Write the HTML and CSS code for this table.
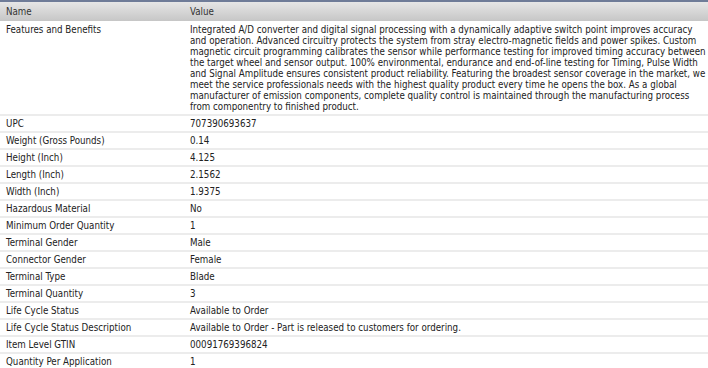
FILE: index.html
```html
<!DOCTYPE html>
<html>
<head>
<meta charset="utf-8">
<link rel="stylesheet" href="styles.css">
</head>
<body>
<div class="grid">
  <div class="hd">Name</div><div class="hd">Value</div>
  <div class="c big">Features and Benefits</div>
  <div class="c big"><span class="ln">Integrated A/D converter and digital signal processing with a dynamically adaptive switch point improves accuracy</span><span class="ln">and operation. Advanced circuitry protects the system from stray electro-magnetic fields and power spikes. Custom</span><span class="ln">magnetic circuit programming calibrates the sensor while performance testing for improved timing accuracy between</span><span class="ln">the target wheel and sensor output. 100% environmental, endurance and end-of-line testing for Timing, Pulse Width</span><span class="ln">and Signal Amplitude ensures consistent product reliability. Featuring the broadest sensor coverage in the market, we</span><span class="ln">meet the service professionals needs with the highest quality product every time he opens the box. As a global</span><span class="ln">manufacturer of emission components, complete quality control is maintained through the manufacturing process</span><span class="ln">from componentry to finished product.</span></div>
  <div class="c">UPC</div><div class="c">707390693637</div>
  <div class="c">Weight (Gross Pounds)</div><div class="c">0.14</div>
  <div class="c">Height (Inch)</div><div class="c">4.125</div>
  <div class="c">Length (Inch)</div><div class="c">2.1562</div>
  <div class="c">Width (Inch)</div><div class="c">1.9375</div>
  <div class="c">Hazardous Material</div><div class="c">No</div>
  <div class="c">Minimum Order Quantity</div><div class="c">1</div>
  <div class="c">Terminal Gender</div><div class="c">Male</div>
  <div class="c">Connector Gender</div><div class="c">Female</div>
  <div class="c">Terminal Type</div><div class="c">Blade</div>
  <div class="c">Terminal Quantity</div><div class="c">3</div>
  <div class="c">Life Cycle Status</div><div class="c">Available to Order</div>
  <div class="c">Life Cycle Status Description</div><div class="c">Available to Order - Part is released to customers for ordering.</div>
  <div class="c">Item Level GTIN</div><div class="c">00091769396824</div>
  <div class="c">Quantity Per Application</div><div class="c">1</div>
</div>
</body>
</html>
```
FILE: styles.css
```css
html, body { margin: 0; padding: 0; background: #fff; }
body {
  font-family: "DejaVu Sans Condensed", "DejaVu Sans", sans-serif;
  font-stretch: condensed;
  font-size: 9.7px;
  color: #222;
  width: 708px;
  overflow: hidden;
}
.grid {
  display: grid;
  grid-template-columns: 184px 1fr;
}
.hd {
  height: 19px;
  line-height: 19px;
  border-top: 2px solid #6f7c98;
  background: linear-gradient(#e6e6e6, #c6c6c6);
  padding: 0 6px;
  color: #333;
}
.c {
  padding: 2px 6px;
  line-height: 11px;
  border-bottom: 2px solid #ececec;
  white-space: nowrap;
}
.c.big { padding: 3px 6px 2px; }
.ln { display: block; }
```
